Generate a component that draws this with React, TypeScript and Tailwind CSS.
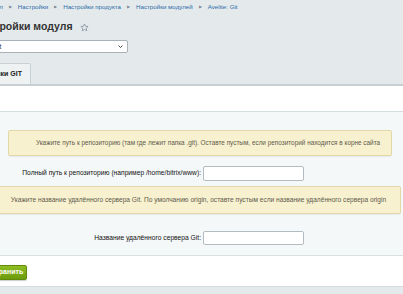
export default function App() {
  const crumbs = ['Настройки', 'Настройки продукта', 'Настройки модулей', 'Avelite: Git']

  return (
    <div className="w-[403px] h-[294px] overflow-hidden bg-[#e4eaec] font-['Liberation_Sans',Arial,sans-serif]">
      {/* breadcrumbs */}
      <div className="h-[14px] flex items-center whitespace-nowrap text-[6.2px] text-[#2c6aa8] ml-[-36px]">
        <span>Рабочий стол</span>
        {crumbs.map((c) => (
          <span key={c} className="flex items-center">
            <span className="px-[6px] text-[#7b8a93] text-[4px]">▶</span>
            <span>{c}</span>
          </span>
        ))}
      </div>

      {/* title */}
      <div className="h-[24px] flex items-center whitespace-nowrap ml-[-25px] mt-[1px]">
        <h1 className="text-[10.5px] font-bold text-[#333]">Настройки модуля</h1>
        <svg className="ml-[7px] mt-[1px]" width="9" height="9" viewBox="0 0 24 24" fill="none" stroke="#8d9aa3" strokeWidth="2.4" strokeLinejoin="round">
          <path d="M12 2.5l2.9 6.2 6.7.7-5 4.6 1.4 6.7L12 17.3l-6 3.4 1.4-6.7-5-4.6 6.7-.7z" />
        </svg>
      </div>

      {/* module select */}
      <div className="h-[13px] w-[162px] ml-[-34px] mt-[1px] bg-white border border-[#a8b1b6] rounded-[2px] flex items-center justify-between pl-[3px] pr-[4px]">
        <span className="text-[6.5px] text-[#222] whitespace-nowrap">Avelite: Git</span>
        <svg width="5" height="3" viewBox="0 0 10 6">
          <path d="M1 1l4 4 4-4" fill="none" stroke="#333" strokeWidth="1.8" />
        </svg>
      </div>

      {/* tabs */}
      <div className="h-[22px] mt-[9px] flex items-end">
        <div className="h-[21px] w-[72px] ml-[-41px] bg-[#eef2f3] border border-b-0 border-[#c9d1d5] rounded-t-[2px] flex items-center justify-end pr-[8px]">
          <span className="text-[7px] font-bold text-[#222] whitespace-nowrap">Настройки GIT</span>
        </div>
      </div>

      {/* panel */}
      <div className="border-t-[2px] border-[#c7cfd3] bg-white">
        <div className="h-[26px] border-b border-[#d4dcdf]" />
        <div className="bg-[#f5f8f9] h-[143px] flex flex-col">
          <div className="mt-[18px] ml-[8px] w-[384px] h-[26px] bg-[#f8f1cf] border border-[#e2d7a6] rounded-[2px] flex items-center justify-center shadow-[0_1px_1px_rgba(0,0,0,0.06)]">
            <span className="text-[6.4px] text-[#5e5a4c] whitespace-nowrap pl-[16px]">
              Укажите путь к репозиторию (там где лежит папка .git). Оставте пустым, если репозиторий находится в корне сайта
            </span>
          </div>

          <div className="flex items-center mt-[10px] h-[15px]">
            <div className="w-[201px] text-right text-[6.7px] text-[#111] whitespace-nowrap">
              Полный путь к репозиторию (например /home/bitrix/www):
            </div>
            <div className="ml-[2px] w-[101px] h-[15px] bg-white border border-[#b3bcc1] rounded-[2px]" />
          </div>

          <div className="mt-[5px] ml-[-4px] w-[405px] h-[28px] bg-[#f8f1cf] border border-[#e2d7a6] rounded-[2px] flex items-center justify-center shadow-[0_1px_1px_rgba(0,0,0,0.06)]">
            <span className="text-[6.6px] text-[#5e5a4c] whitespace-nowrap">
              Укажите название удалённого сервера Git. По умолчанию origin, оставте пустым если название удалённого сервера origin
            </span>
          </div>

          <div className="flex items-center mt-[17px] h-[14px]">
            <div className="w-[201px] text-right text-[6.7px] text-[#111] whitespace-nowrap">
              Название удалённого сервера Git:
            </div>
            <div className="ml-[2px] w-[101px] h-[14px] bg-white border border-[#b3bcc1] rounded-[2px]" />
          </div>
        </div>

        <div className="border-t border-[#d9e0e3] h-[31px] flex items-center">
          <button className="ml-[-18px] mt-[2px] w-[45px] h-[15px] rounded-[2px] bg-gradient-to-b from-[#8fbd22] to-[#6c9a0d] border border-[#5f8a0a] text-white text-[7px] font-bold flex items-center justify-center shadow-[0_1px_1px_rgba(0,0,0,0.2)]">
            Сохранить
          </button>
        </div>
      </div>
      <div className="h-[8px] bg-[#e4eaec] border-t border-[#d3dbde]" />
    </div>
  )
}
